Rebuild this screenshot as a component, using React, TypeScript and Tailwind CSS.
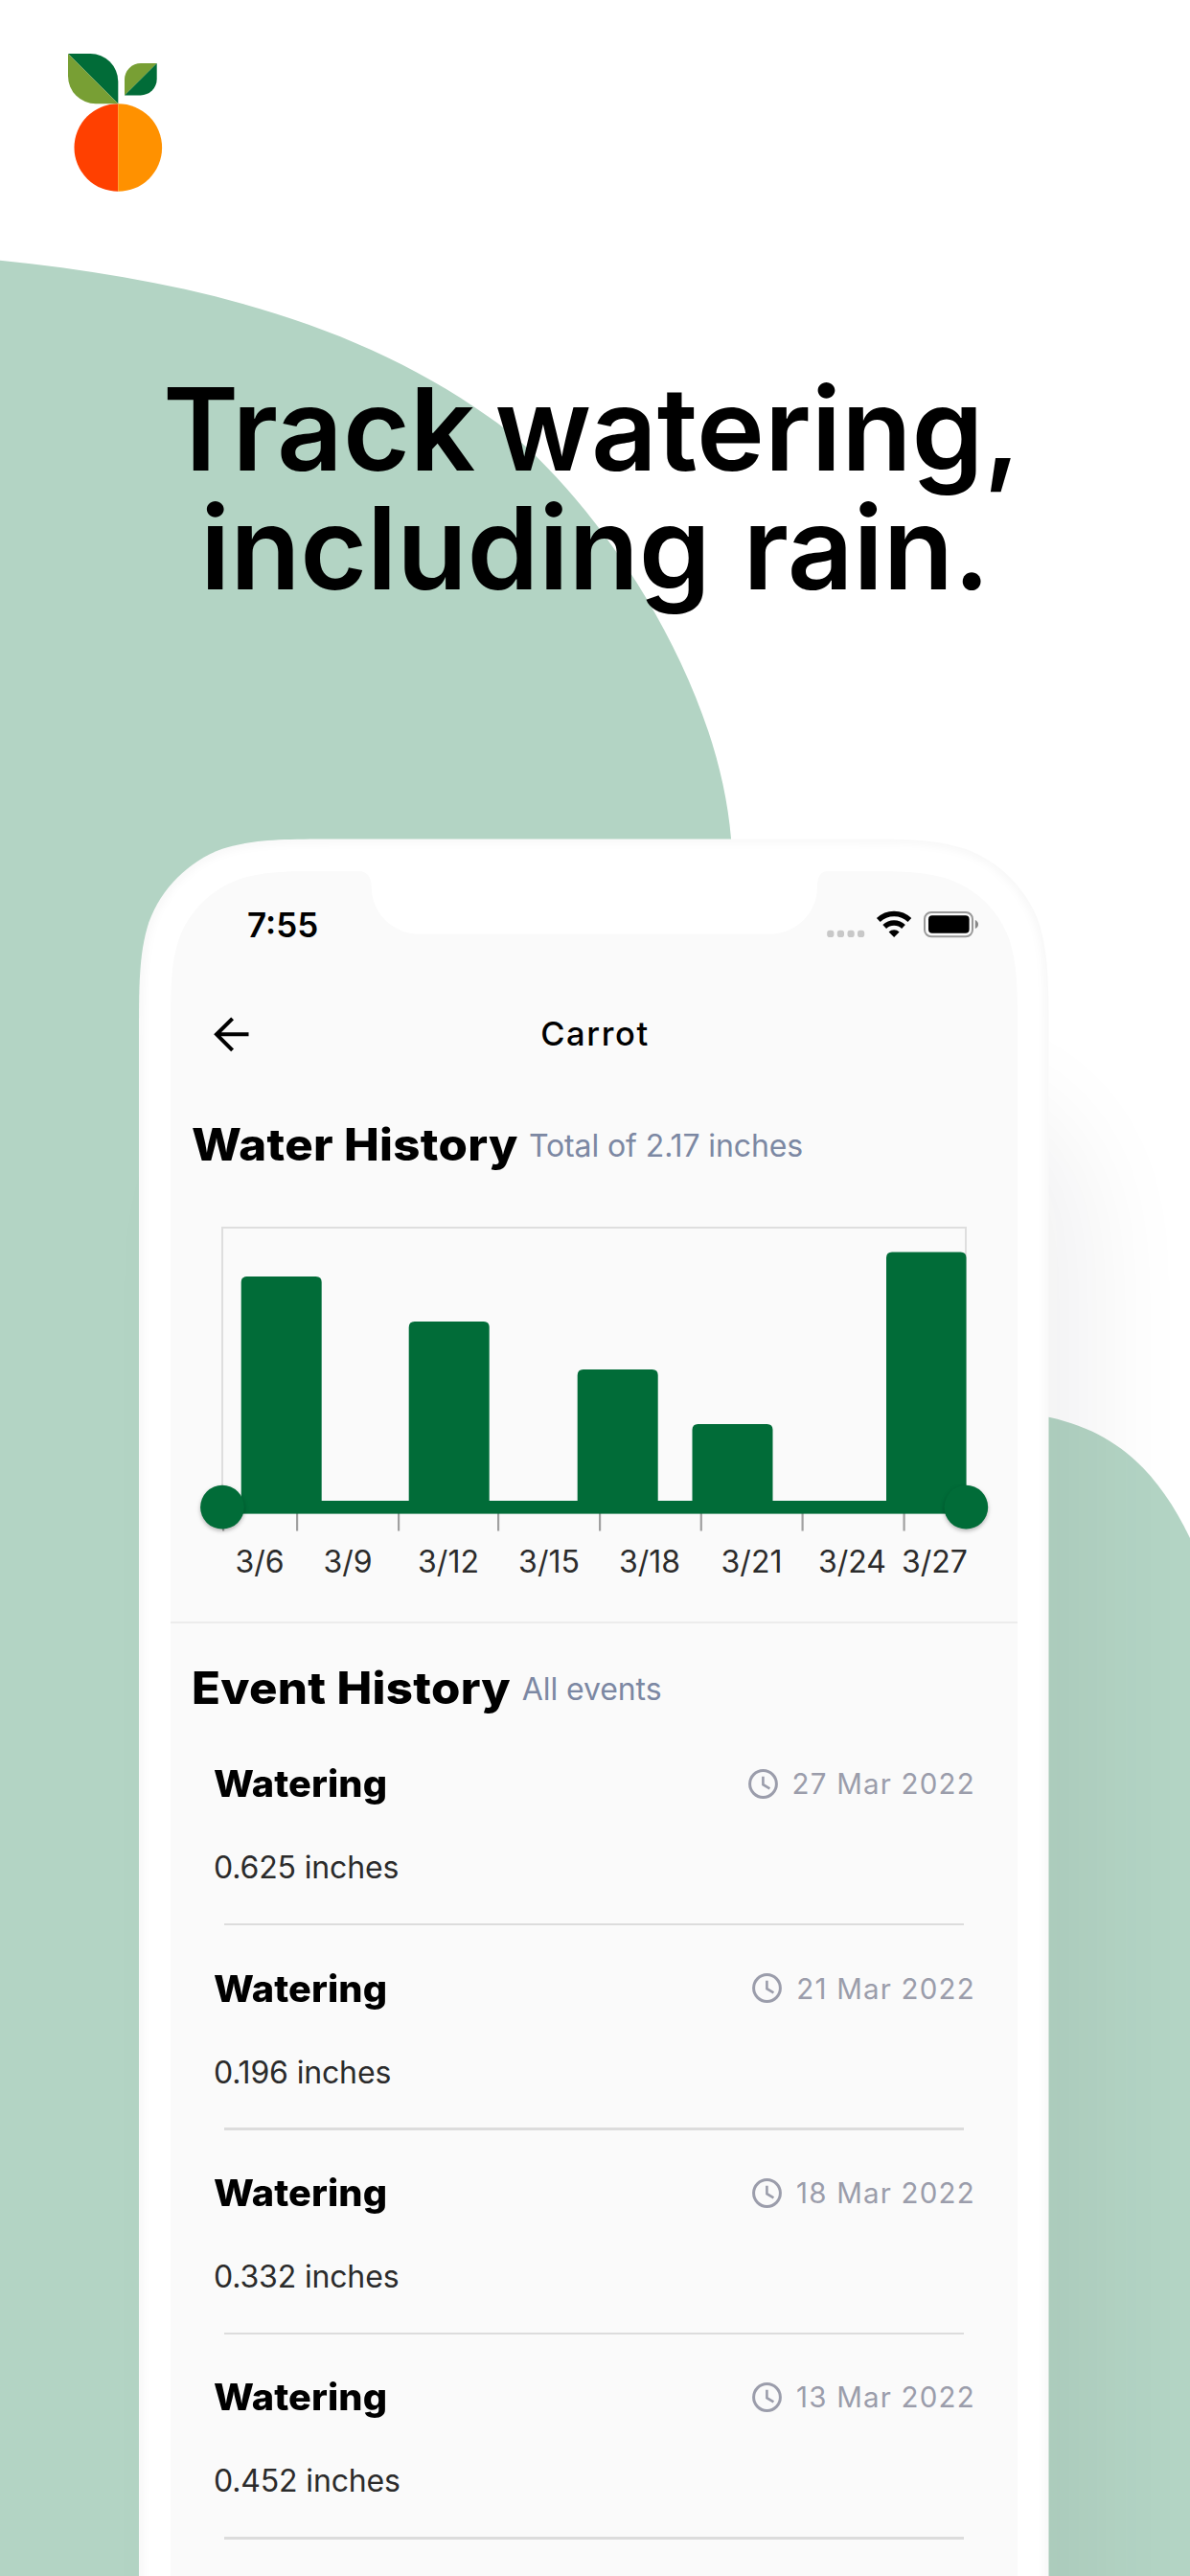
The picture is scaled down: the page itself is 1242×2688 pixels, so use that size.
const EVENTS = [
  { title: "Watering", amount: "0.625 inches", date: "27 Mar 2022" },
  { title: "Watering", amount: "0.196 inches", date: "21 Mar 2022" },
  { title: "Watering", amount: "0.332 inches", date: "18 Mar 2022" },
  { title: "Watering", amount: "0.452 inches", date: "13 Mar 2022" },
];

const BARS = [
  { x: 73.7, w: 84, top: 108 },
  { x: 248.7, w: 84, top: 155 },
  { x: 424.7, w: 84, top: 205 },
  { x: 544.5, w: 84, top: 262 },
  { x: 747, w: 83.5, top: 82.5 },
];

const TICKS = [55, 132, 238, 342, 448, 553.7, 659.5, 765.5];

const LABELS = [
  { x: 93, text: "3/6" },
  { x: 185, text: "3/9" },
  { x: 290, text: "3/12" },
  { x: 395, text: "3/15" },
  { x: 500, text: "3/18" },
  { x: 606.5, text: "3/21" },
  { x: 711.5, text: "3/24" },
  { x: 797.5, text: "3/27" },
];

const BODY =
  "M355.95 875.5 H883.55 C944.4 875.5 974.7 875.5 1007.4 885.8 C1043 898.8 1071.2 927 1084.2 962.6 C1094.5 995.3 1094.5 1025.7 1094.5 1086.5 V2720 H145 V1086.5 C145 1025.7 145 995.3 155.3 962.6 C168.3 927 196.5 898.8 232.1 885.8 C264.8 875.5 295.1 875.5 355.95 875.5 Z";

const SCREEN =
  "M350.7 909 H374 C383 909 387.7 915 387.7 925 C387.7 953 410 974.7 438 974.7 H803 C831 974.7 853 953 853 925 C853 915 856 909 865 909 H889.3 C939 909 963.9 909 990.6 917.5 C1019.9 928.1 1042.9 951.1 1053.5 980.4 C1062 1007.1 1062 1032 1062 1081.7 V2700 H178 V1081.7 C178 1032 178 1007.1 186.5 980.4 C197.1 951.1 220.1 928.1 249.4 917.5 C276.1 909 301 909 350.7 909 Z";

function Backdrop() {
  return (
    <svg className="absolute inset-0" width="1242" height="2688" viewBox="0 0 1242 2688" aria-hidden="true">
      <defs>
        <filter id="far" x="-30%" y="-30%" width="160%" height="160%">
          <feGaussianBlur stdDeviation="56" />
        </filter>
        <filter id="rim" filterUnits="userSpaceOnUse" x="100" y="830" width="1040" height="1900">
          <feGaussianBlur stdDeviation="4" />
        </filter>
        <clipPath id="body">
          <path d={BODY} />
        </clipPath>
      </defs>
      <path
        d="M0 271.8 C180 290 365 331 510 435 C600 495 748 690 763 875 C770 1100 700 1500 600 2688 H0 Z"
        fill="#b3d4c4"
      />
      <path d="M1080 1476 C1155 1488 1204 1526 1242 1605 V2688 H1080 Z" fill="#b3d4c4" />
      <rect x="210" y="1130" width="930" height="1900" rx="160" fill="#16161f" opacity="0.056" filter="url(#far)" />
      <path d={BODY} fill="#ffffff" />
      <g clipPath="url(#body)">
        <path d={BODY} fill="none" stroke="#000000" strokeOpacity="0.04" strokeWidth="7" filter="url(#rim)" />
      </g>
      <path d={SCREEN} fill="#fafafa" />
    </svg>
  );
}

function Logo() {
  return (
    <svg width="99" height="145" viewBox="71 56 99 145" aria-label="Logo">
      <path d="M123.3 108.2 A45.8 45.8 0 0 0 123.3 199.8 Z" fill="#ff4000" />
      <path d="M123.3 108.2 A45.8 45.8 0 0 1 123.3 199.8 Z" fill="#ff9100" />
      <path d="M71 56 H94.3 A29 29 0 0 1 123.3 85 V108.3 Z" fill="#016c38" />
      <path d="M71 56 V79.3 A29 29 0 0 0 100 108.3 H123.3 Z" fill="#789f34" />
      <path d="M163.7 66 H147 A17 17 0 0 0 130 83 V99.4 Z" fill="#789f34" />
      <path d="M163.7 66 V82.4 A17 17 0 0 1 146.7 99.4 H130 Z" fill="#016c38" />
    </svg>
  );
}

function StatusIcons() {
  return (
    <svg width="160" height="30" viewBox="862 949 160 30" aria-hidden="true">
      {[863.2, 873.8, 884.5, 895].map((x) => (
        <rect key={x} x={x} y="970.7" width="7.2" height="7.3" rx="2.8" fill="#c8c8c8" />
      ))}
      <g fill="none" stroke="#000000" strokeWidth="5.4">
        <path d="M916.8 960 A23.5 23.5 0 0 1 949.4 960" />
        <path d="M923.2 967 A14.3 14.3 0 0 1 943 967" />
      </g>
      <path d="M933.1 978 L927.6 972.4 A7.8 7.8 0 0 1 938.6 972.4 Z" fill="#000000" />
      <rect x="965" y="952" width="50" height="25.3" rx="7" fill="none" stroke="#999999" strokeWidth="2" />
      <rect x="969" y="955.2" width="42.6" height="18.6" rx="4" fill="#000000" />
      <path d="M1017.8 960 Q1021 961.5 1021 964.5 Q1021 967.5 1017.8 969 Z" fill="#888888" />
    </svg>
  );
}

function BackArrow() {
  return (
    <svg width="37" height="37" viewBox="0 0 37 37" fill="none" stroke="#000000" strokeWidth="4" aria-label="Back">
      <path d="M36.5 18.3 H3.5 M19.6 1.8 L3 18.3 L19.6 34.9" />
    </svg>
  );
}

function Clock() {
  return (
    <svg width="31" height="31" viewBox="0 0 31 31" fill="none" stroke="#9b9dab" aria-hidden="true">
      <circle cx="15.5" cy="15.5" r="13.9" strokeWidth="3" />
      <path d="M15.4 7.8 V16.2 L22.4 20.4" strokeWidth="2.6" />
    </svg>
  );
}

function WaterChart() {
  return (
    <svg className="block h-[468px] w-[884px]" viewBox="0 0 884 468" role="img" aria-label="Water history">
      <path d="M54 349 V57 H830 V349" fill="none" stroke="#dedede" strokeWidth="2" />
      {TICKS.map((x) => (
        <rect key={x} x={x - 1} y="355" width="2.2" height="18.5" fill="#a0a0a0" />
      ))}
      {BARS.map((b) => (
        <path
          key={b.x}
          d={`M${b.x} 350 V${b.top + 6} q0 -6 6 -6 H${b.x + b.w - 6} q6 0 6 6 V350 Z`}
          fill="#016c38"
        />
      ))}
      <rect x="54" y="342" width="776" height="13.6" fill="#016c38" />
      {[54, 830.3].map((x) => (
        <circle
          key={x}
          cx={x}
          cy="348.7"
          r="22.9"
          fill="#016c38"
          className="drop-shadow-[0_2px_2px_rgba(0,0,0,0.28)]"
        />
      ))}
      <g fill="#2b2b2b" textAnchor="middle" className="font-['Inter',sans-serif] text-[32px] font-normal">
        {LABELS.map((l) => (
          <text key={l.text} x={l.x} y="416.6">
            {l.text}
          </text>
        ))}
      </g>
    </svg>
  );
}

function SectionTitle({ title, note }: { title: string; note: string }) {
  return (
    <div className="flex h-[60px] items-end whitespace-nowrap pl-[22px]">
      <h2 className="origin-left scale-x-[1.068] text-[46px] font-[800] leading-[60px] tracking-[0.3px]">{title}</h2>
      <span className="ml-[33px] text-[32px] leading-[56px] tracking-[-0.1px] text-[#7c88a3]">{note}</span>
    </div>
  );
}

export default function App() {
  return (
    <div className="relative h-[2688px] w-[1242px] overflow-hidden bg-white font-['Inter',sans-serif] text-black">
      <Backdrop />
      <div className="relative flex flex-col">
        <header className="h-[386px] pl-[71px] pt-[56px]">
          <Logo />
        </header>
        <h1 className="flex h-[523px] flex-col items-center whitespace-nowrap text-[120px] font-semibold leading-[124px]">
          <span className="pr-[7px] tracking-[0px] [word-spacing:-10px]">Track watering,</span>
          <span className="tracking-[-0.2px] [word-spacing:4px]">including rain.</span>
        </h1>

        <main className="ml-[178px] w-[884px]">
          <div className="flex h-[135px] items-start justify-between pl-[80px] pr-[40px] pt-[40px]">
            <span className="text-[35px] font-semibold leading-[33px]">7:55</span>
            <StatusIcons />
          </div>

          <div className="grid h-[120px] grid-cols-3 items-start px-[45px]">
            <div className="flex h-[70px] items-center">
              <BackArrow />
            </div>
            <h3 className="pl-[2px] text-center text-[34.5px] font-medium leading-[70px] tracking-[1.6px]">Carrot</h3>
          </div>

          <SectionTitle title="Water History" note="Total of 2.17 inches" />
          <WaterChart />

          <div className="border-t-2 border-[#ececec] pt-[37px]">
            <SectionTitle title="Event History" note="All events" />
          </div>

          <ul className="pt-[5px]">
            {EVENTS.map((e) => (
              <li key={e.date} className="h-[213.4px] pl-[45px] pr-[44px] pt-[35.3px]">
                <div className="flex h-[60px] items-center justify-between">
                  <span className="origin-left scale-x-[1.045] text-[38px] font-[800] leading-[60px] tracking-[0.1px]">
                    {e.title}
                  </span>
                  <span className="flex items-center gap-[15px] text-[29.5px] leading-[60px] tracking-[1.2px] text-[#9b9dab]">
                    <Clock />
                    {e.date}
                  </span>
                </div>
                <p className="mt-[38px] text-[32px] leading-[40px] tracking-[-0.15px] text-[#2b2b2b]">{e.amount}</p>
                <div className="ml-[11px] mr-[12px] mt-[37.6px] h-[2.5px] bg-[#dcdcdc]" />
              </li>
            ))}
          </ul>
        </main>
      </div>
    </div>
  );
}
